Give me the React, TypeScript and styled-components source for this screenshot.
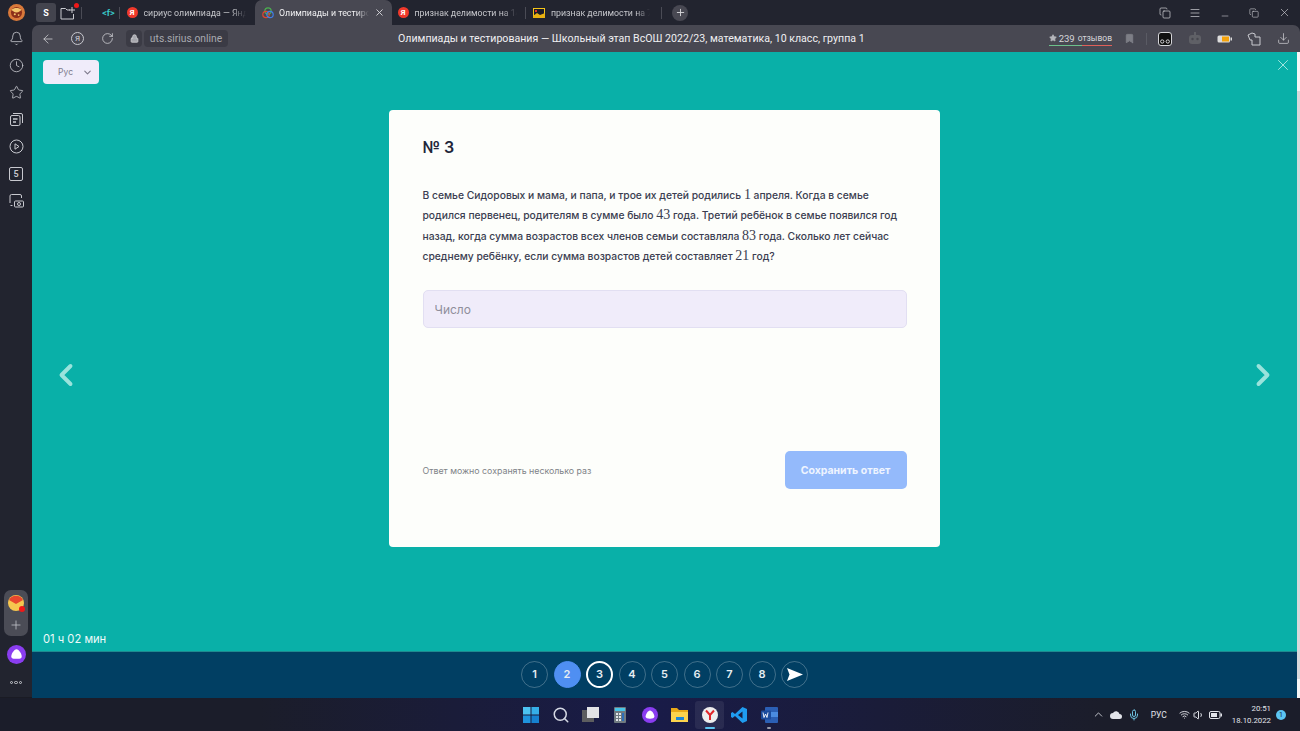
import styled, { createGlobalStyle } from "styled-components";
import {
  Bell,
  ChevronDown,
  ChevronLeft,
  ChevronRight,
  ChevronUp,
  Clock,
  Download,
  Minus,
  Plus,
  RotateCw,
  ArrowLeft,
  Lock,
  Star,
  Bookmark,
  Menu,
  X,
  Copy,
  Search,
  Mic,
  Wifi,
  Volume1,
} from "lucide-react";

const GlobalStyle = createGlobalStyle`
  html, body {
    margin: 0;
    padding: 0;
    height: 100%;
    overflow: hidden;
    background: #22242f;
  }
  * { box-sizing: border-box; }
`;

const AliceIcon = ({ size }: { size: number }) => (
  <svg width={size} height={size} viewBox="0 0 20 20">
    <circle cx="10" cy="10" r="10" fill="#8a3df0" />
    <path d="M10 4.500c2.600 0 5.500 5 5.500 7.500 0 2.200-2.400 2.600-5.500 2.600S4.500 14.200 4.500 12c0-2.500 2.900-7.500 5.500-7.500z" fill="#fff" />
  </svg>
);

const BrowserLogo = () => (
  <svg width="17" height="17" viewBox="0 0 20 20">
    <circle cx="10" cy="10" r="10" fill="#d9793a" />
    <circle cx="10" cy="10" r="6.500" fill="#8c2f1a" />
    <path d="M4 7c3-3 9-3 12 0-2 1-3 3-6 3S6 8 4 7z" fill="#f3c46b" />
    <circle cx="8" cy="12" r="1.200" fill="#f3c46b" />
    <circle cx="12.500" cy="13" r="1" fill="#f3c46b" />
  </svg>
);

const tabs = [
  { title: "сириус олимпиада — Яндекс", width: 135, left: 6.5, right: 9, icon: "ya" },
  { title: "Олимпиады и тестирования", width: 137, left: 7, right: 7, icon: "sirius", active: true },
  { title: "признак делимости на 14", width: 133, left: 5.5, right: 8, icon: "ya", divider: true },
  { title: "признак делимости на 7: ", width: 135, left: 7, right: 11, icon: "pic" },
];

const sideIcons = ["bell", "clock", "star", "collections", "play", "five", "camera"];
const pages = ["1", "2", "3", "4", "5", "6", "7", "8"];

function SideIcon({ name }: { name: string }) {
  if (name === "bell") return <Bell size={15} strokeWidth={1.3} />;
  if (name === "clock") return <Clock size={15} strokeWidth={1.3} />;
  if (name === "star") return <Star size={15} strokeWidth={1.3} />;
  if (name === "collections")
    return (
      <svg width="15" height="15" viewBox="0 0 15 15" fill="none" stroke="currentColor">
        <rect x="1.500" y="3.500" width="9.500" height="10" rx="1.500" />
        <path d="M4 1.500h8a1.500 1.500 0 0 1 1.500 1.500v8" />
        <path d="M4 7h4.500M4 10h3" strokeWidth="1.500" />
      </svg>
    );
  if (name === "play")
    return (
      <svg width="15" height="15" viewBox="0 0 15 15" fill="none" stroke="currentColor">
        <circle cx="7.500" cy="7.500" r="6.500" />
        <path d="M6 4.800l4 2.700-4 2.700z" />
      </svg>
    );
  if (name === "five") return <FiveBox>5</FiveBox>;
  return (
    <svg width="15" height="15" viewBox="0 0 15 15" fill="none" stroke="currentColor">
      <path d="M1 10V3a1.500 1.500 0 0 1 1.500-1.500h8.500A1.500 1.500 0 0 1 12.500 3v2" />
      <path d="M1.500 12.500h2" />
      <rect x="5.500" y="8" width="9" height="6" rx="1" />
      <circle cx="10" cy="11" r="1.500" />
    </svg>
  );
}

function TabIcon({ kind }: { kind: string }) {
  if (kind === "ya") return <YaBadge>Я</YaBadge>;
  if (kind === "pic")
    return (
      <svg width="12" height="10" viewBox="0 0 12 10">
        <rect width="12" height="10" fill="#f5c518" />
        <rect x="1" y="1" width="10" height="6" fill="#1c1c28" />
        <rect x="2" y="2" width="2" height="2" fill="#e0342a" />
        <path d="M0 8l4-3 3 2 5-2v5H0z" fill="#e8b010" />
      </svg>
    );
  return (
    <svg width="12" height="12" viewBox="0 0 12 12" fill="none" strokeWidth="1.200">
      <circle cx="6" cy="4" r="3.200" stroke="#4caf50" />
      <circle cx="4" cy="7.500" r="3.200" stroke="#e0452f" />
      <circle cx="8" cy="7.500" r="3.200" stroke="#3f7fe8" />
    </svg>
  );
}

export default function App() {
  return (
    <Screen>
      <GlobalStyle />
      <TabStrip>
        <LogoCell>
          <BrowserLogo />
        </LogoCell>
        <HomeButton>S</HomeButton>
        <NewFolder>
          <svg width="16" height="14" viewBox="0 0 16 14" fill="none" stroke="#c9cad0">
            <path d="M1 13V2.500h4.500l1.500 1.500h3M1 13h12.500V8M12 1v6M9 4h6" />
          </svg>
          <RedDot />
        </NewFolder>
        <TabDivider $gap={5} />
        <PinnedTab>&lt;f&gt;</PinnedTab>
        <TabDivider $gap={0} />
        {tabs.map((tab) => (
          <TabSlot key={tab.title}>
            <Tab $width={tab.width} $left={tab.left} $right={tab.right} $active={tab.active}>
              <TabIcon kind={tab.icon} />
              <TabTitle $active={tab.active}>{tab.title}</TabTitle>
              {tab.active && <X size={11} color="#d6d6da" />}
            </Tab>
            {tab.divider && <TabDivider $gap={0} />}
          </TabSlot>
        ))}
        <TabDivider $gap={0} />
        <NewTab>
          <Plus size={11} />
        </NewTab>
        <WindowControls>
          <WindowButton>
            <Copy size={12} strokeWidth={1.4} />
          </WindowButton>
          <WindowButton>
            <Menu size={12} strokeWidth={1.4} />
          </WindowButton>
          <WindowButton>
            <MinimizeWrap>
              <Minus size={10} strokeWidth={1.4} />
            </MinimizeWrap>
          </WindowButton>
          <WindowButton>
            <Copy size={10} strokeWidth={1.4} />
          </WindowButton>
          <WindowButton>
            <X size={13} strokeWidth={1.2} />
          </WindowButton>
        </WindowControls>
      </TabStrip>

      <Body>
        <Sidebar>
          <SideGroup>
            {sideIcons.map((name) => (
              <SideButton key={name}>
                <SideIcon name={name} />
              </SideButton>
            ))}
          </SideGroup>
          <SideBottom>
            <AppsPill>
              <MailIcon>
                <svg width="16" height="16" viewBox="0 0 16 16">
                  <circle cx="8" cy="8" r="8" fill="#f6c64f" />
                  <path d="M1 5l7 4 7-4a8 8 0 0 0-14 0z" fill="#e8462e" />
                </svg>
                <MailBadge />
              </MailIcon>
              <Plus size={14} color="#c8c9cf" strokeWidth={1.3} />
            </AppsPill>
            <AliceIcon size={19} />
            <MoreDots>
              <i />
              <i />
              <i />
            </MoreDots>
          </SideBottom>
        </Sidebar>

        <Main>
          <AddressBar>
            <NavIcon $left={9}>
              <ArrowLeft size={14} strokeWidth={1.3} />
            </NavIcon>
            <YaCircle>Я</YaCircle>
            <NavIcon $left={17}>
              <RotateCw size={13} strokeWidth={1.4} />
            </NavIcon>
            <LockBox>
              <Lock size={9} fill="#a5a6ac" />
            </LockBox>
            <UrlBox>uts.sirius.online</UrlBox>
            <PageTitle>
              Олимпиады и тестирования — Школьный этап ВсОШ 2022/23, математика, 10 класс, группа 1
            </PageTitle>
            <Reviews>
              <Star size={8} fill="#b5b6bb" color="#b5b6bb" />
              239 <small>отзывов</small>
            </Reviews>
            <BookmarkWrap>
              <Bookmark size={11} fill="#7d7e86" color="#7d7e86" />
            </BookmarkWrap>
            <BarDivider />
            <GlassesBox>
              <svg width="13" height="5" viewBox="0 0 13 5" fill="none" stroke="#e3e3e6">
                <circle cx="3.500" cy="2.500" r="1.800" />
                <circle cx="9.500" cy="2.500" r="1.800" />
              </svg>
            </GlassesBox>
            <RobotIcon>
              <svg width="14" height="13" viewBox="0 0 14 13" fill="#5f6066">
                <rect x="1" y="3" width="12" height="9" rx="3" />
                <rect x="6" y="0" width="2" height="3" />
                <circle cx="4.500" cy="7" r="1.200" fill="#47474f" />
                <circle cx="9.500" cy="7" r="1.200" fill="#47474f" />
              </svg>
            </RobotIcon>
            <BatteryIcon>
              <svg width="15" height="8" viewBox="0 0 15 8">
                <rect x=".5" y=".5" width="12.500" height="7" rx="1.500" fill="#ddd" />
                <rect x="5" y="1.500" width="7" height="5" fill="#f5a30c" />
                <rect x="13.500" y="2.500" width="1.500" height="3" fill="#ddd" />
              </svg>
            </BatteryIcon>
            <ExtensionIcon>
              <svg width="14" height="14" viewBox="0 0 14 14" fill="none" stroke="#c9cad0">
                <path d="M1 3l4-2 3 1v3h5v8H5V8H3L1 3z" />
              </svg>
            </ExtensionIcon>
            <DownloadWrap>
              <Download size={13} strokeWidth={1.3} />
            </DownloadWrap>
          </AddressBar>

          <Viewport>
            <Content>
              <Page>
                <LangSelect>
                  Рус
                  <ChevronDown size={11} color="#7d7a8c" strokeWidth={2.4} />
                </LangSelect>
                <CloseButton>
                  <X size={18} strokeWidth={1.3} />
                </CloseButton>
                <ArrowButton $side="left">
                  <ChevronLeft size={36} strokeWidth={2.6} />
                </ArrowButton>
                <ArrowButton $side="right">
                  <ChevronRight size={36} strokeWidth={2.6} />
                </ArrowButton>
                <Timer>01 ч 02 мин</Timer>

                <Card>
                  <Heading>№ 3</Heading>
                  <Problem>
                    В семье Сидоровых и мама, и папа, и трое их детей родились <Num>1</Num> апреля. Когда в семье
                    родился первенец, родителям в сумме было <Num>43</Num> года. Третий ребёнок в семье появился год
                    назад, когда сумма возрастов всех членов семьи составляла <Num>83</Num> года. Сколько лет сейчас
                    среднему ребёнку, если сумма возрастов детей составляет <Num>21</Num> год?
                  </Problem>
                  <AnswerInput placeholder="Число" readOnly />
                  <CardFooter>
                    <Note>Ответ можно сохранять несколько раз</Note>
                    <SaveButton>Сохранить ответ</SaveButton>
                  </CardFooter>
                </Card>
              </Page>

              <PageNav>
                {pages.map((p) => (
                  <PageDot key={p} $state={p === "2" ? "answered" : p === "3" ? "current" : "idle"}>
                    {p}
                  </PageDot>
                ))}
                <PageDot $state="idle">
                  <svg width="16" height="13" viewBox="0 0 16 13">
                    <path d="M0 0l16 6.500L0 13l2.500-6.500z" fill="#fff" />
                  </svg>
                </PageDot>
              </PageNav>
            </Content>
            <Scrollbar />
          </Viewport>
        </Main>
      </Body>

      <Taskbar>
        <span />
        <TaskIcons>
          <TaskIcon>
            <svg width="16" height="16" viewBox="0 0 16 16">
              <rect width="7.500" height="7.500" fill="#4cc2f1" />
              <rect x="8.500" width="7.500" height="7.500" fill="#35aee8" />
              <rect y="8.500" width="7.500" height="7.500" fill="#1f93dd" />
              <rect x="8.500" y="8.500" width="7.500" height="7.500" fill="#1681d0" />
            </svg>
          </TaskIcon>
          <TaskIcon>
            <Search size={18} color="#d5d9e4" strokeWidth={2} />
          </TaskIcon>
          <TaskIcon>
            <svg width="17" height="15" viewBox="0 0 17 15">
              <rect y="3" width="12" height="12" fill="#5d5d5f" />
              <rect x="5" width="12" height="11" fill="#e3e3e6" />
            </svg>
          </TaskIcon>
          <TaskIcon>
            <svg width="12" height="16" viewBox="0 0 12 16">
              <rect width="12" height="16" rx="1" fill="#6f7a80" />
              <rect x="1" y="1" width="10" height="3" fill="#48c4e8" />
              <rect x="2" y="6" width="2" height="2" fill="#e2e5e8" />
              <rect x="5" y="6" width="2" height="2" fill="#e2e5e8" />
              <rect x="2" y="9" width="2" height="2" fill="#e2e5e8" />
              <rect x="5" y="9" width="2" height="2" fill="#e2e5e8" />
              <rect x="2" y="12" width="2" height="2" fill="#e2e5e8" />
              <rect x="5" y="12" width="2" height="2" fill="#e2e5e8" />
              <rect x="8" y="6" width="2" height="8" fill="#2f6fb8" />
            </svg>
          </TaskIcon>
          <TaskIcon>
            <AliceIcon size={16} />
          </TaskIcon>
          <TaskIcon>
            <svg width="17" height="15" viewBox="0 0 17 15">
              <path d="M0 1h6l2 2h9v12H0z" fill="#e9a917" />
              <rect y="5" width="17" height="10" fill="#fcd34d" />
              <rect x="5" y="10" width="8" height="3" fill="#1d87d8" />
            </svg>
          </TaskIcon>
          <TaskIcon $active>
            <svg width="16" height="16" viewBox="0 0 16 16">
              <circle cx="8" cy="8" r="8" fill="#eee" />
              <path d="M4 3.500l4 4.500 4-4.500M8 8v5" fill="none" stroke="#e2262a" strokeWidth="2" />
            </svg>
          </TaskIcon>
          <TaskIcon>
            <svg width="16" height="16" viewBox="0 0 16 16">
              <path d="M11.500 0L16 2v12l-4.500 2L4 9l-2.500 2L0 10V6l1.500-1L4 7z" fill="#1f9cf0" />
              <path d="M11.500 4.500L7 8l4.500 3.500z" fill="#1b1d3f" />
            </svg>
          </TaskIcon>
          <TaskIcon $dot>
            <svg width="17" height="16" viewBox="0 0 17 16">
              <rect x="4" y="0" width="13" height="16" rx="1" fill="#2b5fb4" />
              <rect x="4" y="5" width="13" height="5" fill="#4a8be0" />
              <rect x="0" y="3.500" width="10" height="9" rx="1" fill="#1b4b9c" />
              <path d="M2 5.500l1 5 1.500-3.500 1.500 3.500 1-5" fill="none" stroke="#fff" strokeWidth=".9" />
            </svg>
          </TaskIcon>
        </TaskIcons>
        <Tray>
          <ChevronUp size={13} strokeWidth={1.5} />
          <svg width="12" height="8" viewBox="0 0 12 8">
            <path d="M3 8a3 3 0 0 1 0-6 3.500 3.500 0 0 1 6.500 1A2.500 2.500 0 0 1 9.500 8z" fill="#e2e4ea" />
          </svg>
          <MicWrap>
            <Mic size={12} color="#6dc0dd" />
          </MicWrap>
          <TrayLang>РУС</TrayLang>
          <TrayStatus>
            <Wifi size={11} />
            <Volume1 size={12} />
            <svg width="13" height="8" viewBox="0 0 13 8">
              <rect x=".5" y=".5" width="10.500" height="7" rx="1.500" fill="none" stroke="#e2e4ea" />
              <rect x="2" y="2" width="6" height="4" fill="#e2e4ea" />
              <rect x="11.500" y="2.500" width="1.500" height="3" fill="#e2e4ea" />
            </svg>
          </TrayStatus>
          <Clockface>
            <span>20:51</span>
            <span>18.10.2022</span>
          </Clockface>
          <NotifyBadge>1</NotifyBadge>
        </Tray>
      </Taskbar>
    </Screen>
  );
}

const Screen = styled.div`
  display: flex;
  flex-direction: column;
  width: 1300px;
  height: 731px;
  overflow: hidden;
  background: #22242f;
  font-family: Roboto, "Noto Sans", sans-serif;
`;

/* tab strip */
const TabStrip = styled.div`
  display: flex;
  align-items: center;
  flex: 0 0 25px;
  color: #d6d6da;
`;
const LogoCell = styled.div`
  display: flex;
  align-items: center;
  justify-content: center;
  width: 32px;
  height: 25px;
`;
const HomeButton = styled.div`
  display: flex;
  align-items: center;
  justify-content: center;
  width: 20px;
  height: 19px;
  margin-left: 4px;
  border-radius: 3px;
  background: #43444e;
  color: #fff;
  font-size: 9px;
  font-weight: 700;
`;
const NewFolder = styled.div`
  position: relative;
  display: flex;
  margin-left: 4px;
`;
const RedDot = styled.span`
  position: absolute;
  top: -3px;
  right: -3px;
  width: 5px;
  height: 5px;
  border-radius: 50%;
  background: #f01818;
`;
const TabDivider = styled.span<{ $gap: number }>`
  flex: none;
  width: 1px;
  height: 12px;
  margin: 0 ${({ $gap }) => $gap}px;
  background: #4a4b55;
`;
const PinnedTab = styled.div`
  width: 21px;
  margin-left: 11px;
  text-align: center;
  color: #38c4c4;
  font-size: 9px;
  font-weight: 700;
`;
const TabSlot = styled.div`
  display: flex;
  align-items: center;
`;
const Tab = styled.div<{ $width: number; $left: number; $right: number; $active?: boolean }>`
  display: flex;
  align-items: center;
  gap: ${({ $active }) => ($active ? 5 : 6)}px;
  flex: none;
  width: ${({ $width }) => $width}px;
  height: 25px;
  padding: 0 ${({ $right }) => $right}px 0 ${({ $left }) => $left}px;
  border-radius: 7px 7px 0 0;
  background: ${({ $active }) => ($active ? "#484852" : "transparent")};
`;
const YaBadge = styled.span`
  display: flex;
  align-items: center;
  justify-content: center;
  flex: none;
  width: 11px;
  height: 11px;
  border-radius: 50%;
  background: #f0392b;
  color: #fff;
  font-size: 8px;
  font-weight: 700;
`;
const TabTitle = styled.span<{ $active?: boolean }>`
  flex: 1;
  min-width: 0;
  overflow: hidden;
  white-space: nowrap;
  color: ${({ $active }) => ($active ? "#f0f0f2" : "#c6c7cc")};
  font-size: 8.800px;
  -webkit-mask-image: linear-gradient(90deg, #000 86%, transparent);
  mask-image: linear-gradient(90deg, #000 86%, transparent);
`;
const NewTab = styled.div`
  display: flex;
  align-items: center;
  justify-content: center;
  width: 16px;
  height: 16px;
  margin-left: 10px;
  border-radius: 50%;
  background: #484852;
`;
const WindowControls = styled.div`
  display: flex;
  align-items: center;
  margin-left: auto;
  padding-right: 1px;
`;
const WindowButton = styled.div`
  display: flex;
  align-items: center;
  justify-content: center;
  width: 29.800px;
  height: 25px;
  color: #d0d1d6;
`;
const MinimizeWrap = styled.div`
  display: flex;
  margin-top: 6px;
`;

/* sidebar */
const Body = styled.div`
  display: flex;
  flex: 1;
  min-height: 0;
`;
const Sidebar = styled.aside`
  display: flex;
  flex-direction: column;
  justify-content: space-between;
  flex: 0 0 32px;
  padding: 0 0 13px;
  border-bottom: 1px solid #1a1b24;
  color: #c8c9cf;
`;
const SideGroup = styled.div`
  display: flex;
  flex-direction: column;
  align-items: center;
`;
const SideButton = styled.div`
  display: flex;
  align-items: center;
  justify-content: center;
  width: 32px;
  height: 27px;
`;
const FiveBox = styled.div`
  display: flex;
  align-items: center;
  justify-content: center;
  width: 14px;
  height: 14px;
  border: 1px solid currentColor;
  border-radius: 2px;
  font-size: 9px;
  font-weight: 600;
`;
const SideBottom = styled.div`
  display: flex;
  flex-direction: column;
  align-items: center;
  gap: 9px;
`;
const AppsPill = styled.div`
  display: flex;
  flex-direction: column;
  align-items: center;
  gap: 7px;
  width: 24px;
  height: 46px;
  padding-top: 5px;
  border-radius: 7px;
  background: #4b4c56;
`;
const MailIcon = styled.div`
  position: relative;
  display: flex;
`;
const MailBadge = styled.span`
  position: absolute;
  right: -1px;
  bottom: -1px;
  width: 6px;
  height: 6px;
  border-radius: 50%;
  background: #f01818;
`;
const MoreDots = styled.div`
  display: flex;
  gap: 1px;
  margin-top: 8px;
  i {
    width: 3.500px;
    height: 3.500px;
    border: 1px solid #c8c9cf;
    border-radius: 50%;
  }
`;

/* address bar */
const Main = styled.main`
  display: flex;
  flex-direction: column;
  flex: 1;
  min-width: 0;
`;
const AddressBar = styled.div`
  display: flex;
  align-items: center;
  flex: 0 0 27px;
  border-radius: 7px 7px 0 0;
  background: #484852;
  color: #d6d6da;
`;
const NavIcon = styled.div<{ $left: number }>`
  display: flex;
  margin-left: ${({ $left }) => $left}px;
`;
const YaCircle = styled.div`
  display: flex;
  align-items: center;
  justify-content: center;
  width: 13px;
  height: 13px;
  margin-left: 16px;
  border: 1px solid #c8c9cf;
  border-radius: 50%;
  font-size: 8px;
`;
const LockBox = styled.div`
  display: flex;
  align-items: center;
  justify-content: center;
  width: 16px;
  height: 17px;
  margin-left: 12px;
  border-radius: 4px;
  background: #3b3b45;
`;
const UrlBox = styled.div`
  width: 84px;
  height: 17px;
  margin-left: 2px;
  border-radius: 4px;
  background: #3b3b45;
  color: #a8a9af;
  font-size: 10.300px;
  line-height: 17px;
  text-align: center;
  white-space: nowrap;
`;
const PageTitle = styled.div`
  margin-left: 170px;
  color: #f0f0f2;
  font-size: 10.600px;
  white-space: nowrap;
`;
const Reviews = styled.div`
  display: flex;
  align-items: center;
  gap: 2px;
  height: 15px;
  margin-left: auto;
  border-bottom: 1px solid;
  border-image: linear-gradient(90deg, #6cc08b 52%, #e0605a 52%) 1;
  color: #d6d6da;
  font-size: 9.500px;
  white-space: nowrap;
  small {
    font-size: 8.500px;
    margin-left: 1px;
  }
`;
const BookmarkWrap = styled.div`
  display: flex;
  margin-left: 12px;
`;
const BarDivider = styled.span`
  width: 1px;
  height: 12px;
  margin-left: 11px;
  background: #5a5b64;
`;
const GlassesBox = styled.div`
  display: flex;
  align-items: flex-end;
  justify-content: center;
  width: 14px;
  height: 14px;
  margin-left: 11px;
  padding-bottom: 1px;
  border: 1px solid #d6d6da;
  border-radius: 3px;
  background: #111;
`;
const RobotIcon = styled.div`
  display: flex;
  margin-left: 16px;
`;
const BatteryIcon = styled.div`
  display: flex;
  margin-left: 15px;
`;
const ExtensionIcon = styled.div`
  display: flex;
  margin-left: 15px;
`;
const DownloadWrap = styled.div`
  display: flex;
  margin: 0 10px 0 16px;
`;

/* page */
const Viewport = styled.div`
  display: flex;
  flex: 1;
  min-height: 0;
`;
const Content = styled.div`
  display: flex;
  flex-direction: column;
  flex: 1;
  min-width: 0;
`;
const Scrollbar = styled.div`
  flex: 0 0 3px;
  background: linear-gradient(180deg, #f6f6f6 6%, #d9d9dc 6%, #d9d9dc 97%, #f6f6f6 97%);
`;
const Page = styled.div`
  position: relative;
  display: flex;
  justify-content: center;
  flex: 1;
  padding-top: 58px;
  background: #09b0a8;
`;
const LangSelect = styled.div`
  position: absolute;
  top: 8px;
  left: 11px;
  display: flex;
  align-items: center;
  justify-content: flex-end;
  gap: 9px;
  width: 56px;
  height: 24px;
  padding-right: 6px;
  border-radius: 4px;
  background: #f0ecfa;
  color: #7d7a8c;
  font-family: Inter, sans-serif;
  font-size: 8.500px;
`;
const CloseButton = styled.div`
  position: absolute;
  top: 4px;
  right: 5px;
  display: flex;
  color: #a5e6e0;
`;
const ArrowButton = styled.div<{ $side: "left" | "right" }>`
  position: absolute;
  top: 305px;
  ${({ $side }) => ($side === "left" ? "left: 16px;" : "right: 16px;")}
  display: flex;
  color: #9ae3dc;
`;
const Timer = styled.div`
  position: absolute;
  left: 11px;
  bottom: 5px;
  color: #eefafa;
  font-family: Inter, sans-serif;
  font-size: 11.200px;
`;
const Card = styled.section`
  display: flex;
  flex-direction: column;
  width: 551px;
  height: 437px;
  padding: 26px 33.500px 0;
  border-radius: 4px;
  background: #fdfefb;
  color: #22263a;
  font-family: Inter, sans-serif;
`;
const Heading = styled.h2`
  margin: 0;
  font-size: 16px;
  font-weight: 600;
  line-height: 22px;
`;
const Problem = styled.p`
  margin: 27px 0 0;
  color: #3a3d50;
  font-size: 10.300px;
  font-weight: 500;
  line-height: 20.300px;
`;
const Num = styled.span`
  font-family: "Liberation Serif", serif;
  font-size: 14px;
  font-weight: 400;
`;
const AnswerInput = styled.input`
  display: block;
  width: 100%;
  height: 38px;
  margin-top: 24px;
  padding: 0 11px;
  border: 1px solid #e2dff2;
  border-radius: 5px;
  outline: none;
  background: #f0ecfa;
  font-family: Inter, sans-serif;
  font-size: 12px;
  &::placeholder {
    color: #8f8e9b;
  }
`;
const CardFooter = styled.div`
  display: flex;
  align-items: center;
  justify-content: space-between;
  margin-top: 123px;
`;
const Note = styled.span`
  color: #7f8388;
  font-size: 8.800px;
`;
const SaveButton = styled.button`
  width: 122px;
  height: 38px;
  padding: 0;
  border: none;
  border-radius: 5px;
  background: #94bafb;
  color: #eef4ff;
  font-family: Inter, sans-serif;
  font-size: 10.500px;
  font-weight: 700;
`;

/* question numbers */
const PageNav = styled.nav`
  display: flex;
  align-items: center;
  justify-content: center;
  gap: 5.500px;
  flex: 0 0 47px;
  padding-bottom: 2px;
  border-top: 1px solid #1f8a90;
  background: #013f63;
`;
const PageDot = styled.div<{ $state: "idle" | "answered" | "current" }>`
  display: flex;
  align-items: center;
  justify-content: center;
  width: 27px;
  height: 27px;
  border-radius: 50%;
  border: 1px solid
    ${({ $state }) =>
      $state === "idle" ? "rgba(255,255,255,.25)" : $state === "current" ? "#fff" : "#4f8ff2"};
  border-width: ${({ $state }) => ($state === "current" ? "2px" : "1px")};
  background: ${({ $state }) => ($state === "answered" ? "#4f8ff2" : "transparent")};
  color: #e6edf2;
  font-family: Inter, sans-serif;
  font-size: 11px;
  font-weight: 600;
`;

/* taskbar */
const Taskbar = styled.footer`
  display: grid;
  grid-template-columns: 1fr auto 1fr;
  align-items: center;
  flex: 0 0 33px;
  background: linear-gradient(90deg, #1b1d2a 20%, #191b48 50%, #1b1d2a 85%);
  color: #e2e4ea;
`;
const TaskIcons = styled.div`
  display: flex;
`;
const TaskIcon = styled.div<{ $active?: boolean; $dot?: boolean }>`
  position: relative;
  display: flex;
  align-items: center;
  justify-content: center;
  width: 29.800px;
  height: 28px;
  border-radius: 3px;
  background: ${({ $active }) => ($active ? "rgba(255,255,255,.07)" : "transparent")};
  &::after {
    content: "";
    display: ${({ $active, $dot }) => ($active || $dot ? "block" : "none")};
    position: absolute;
    bottom: 0;
    left: 50%;
    width: ${({ $active }) => ($active ? "10px" : "4px")};
    height: 2px;
    margin-left: ${({ $active }) => ($active ? "-5px" : "-2px")};
    border-radius: 1px;
    background: ${({ $active }) => ($active ? "#5cc5f2" : "#9a9cab")};
  }
`;
const Tray = styled.div`
  display: flex;
  align-items: center;
  justify-content: flex-end;
  gap: 5px;
  padding-right: 14px;
`;
const MicWrap = styled.div`
  display: flex;
  margin-left: 1px;
`;
const TrayLang = styled.span`
  margin-left: 6px;
  font-size: 8.500px;
`;
const TrayStatus = styled.div`
  display: flex;
  align-items: center;
  gap: 3.500px;
  margin-left: 7px;
`;
const Clockface = styled.div`
  display: flex;
  flex-direction: column;
  align-items: flex-end;
  margin-left: 5px;
  font-size: 7.800px;
  line-height: 12px;
`;
const NotifyBadge = styled.span`
  display: flex;
  align-items: center;
  justify-content: center;
  width: 10px;
  height: 10px;
  border-radius: 50%;
  background: #5cc5f2;
  color: #12233a;
  font-size: 7px;
`;
